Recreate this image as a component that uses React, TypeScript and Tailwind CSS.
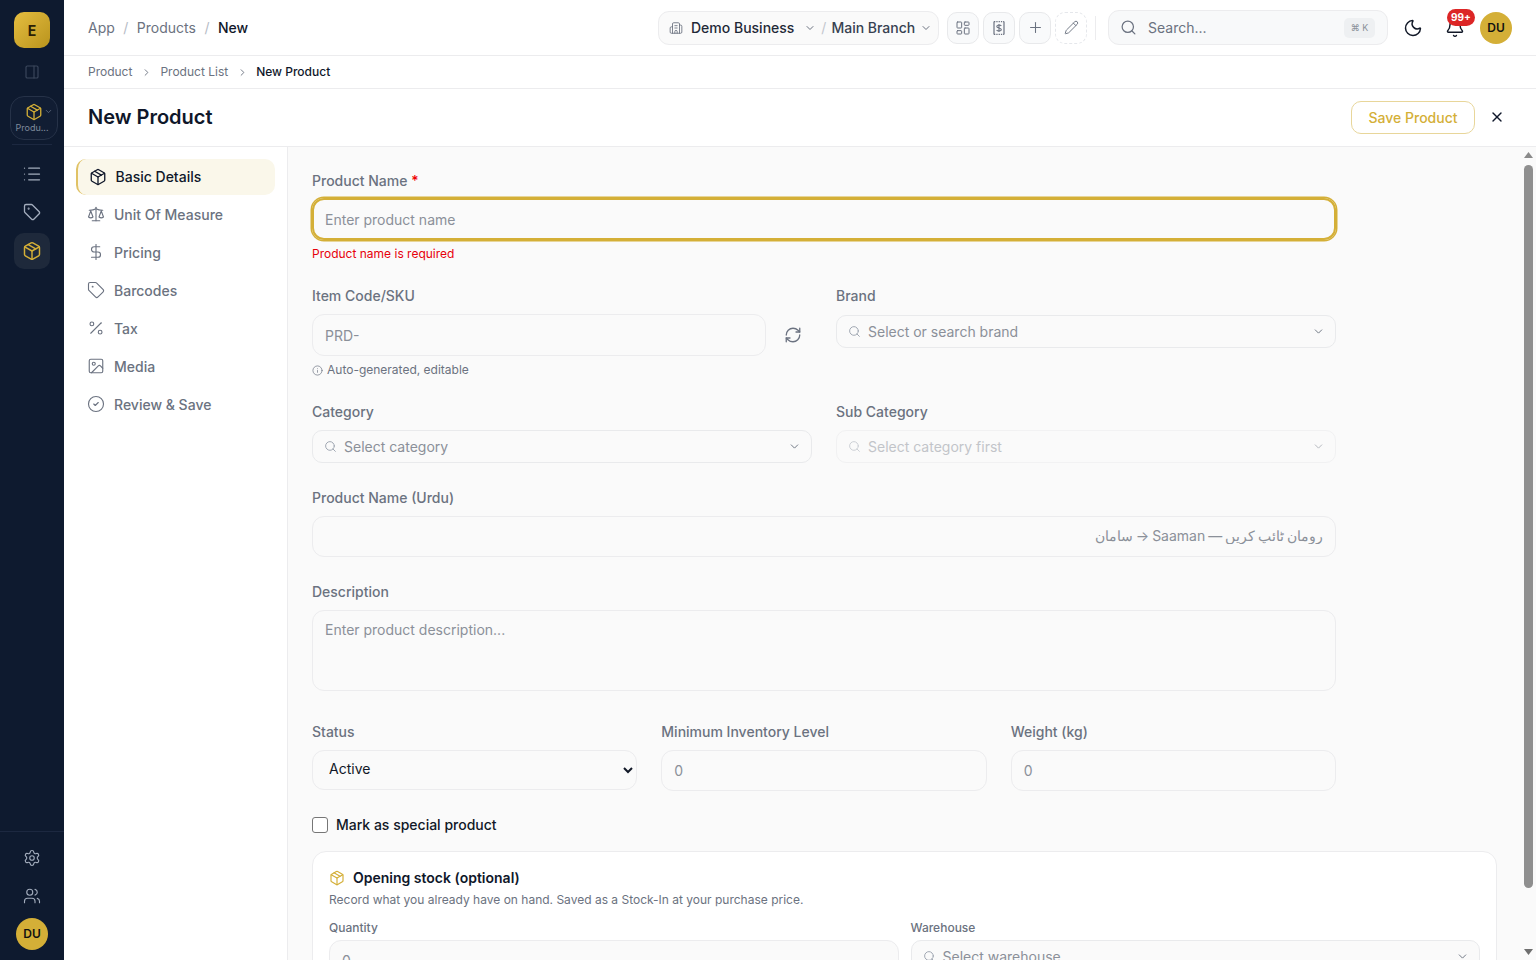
import { Package, PanelRight, ChevronDown, ChevronRight, List, Tag, Settings, Users, Scale, DollarSign, Percent, Image, CircleCheck, RefreshCw, Info, Building2, LayoutDashboard, Plus, Pencil, Search, Moon, Bell, X } from "lucide-react";

const font = { fontFamily: "Inter, 'Noto Sans', sans-serif" };

function Label({ children, className = "" }: { children: React.ReactNode; className?: string }) {
  return <label className={`block text-[14px] leading-[20px] font-medium text-[#6b7280] ${className}`}>{children}</label>;
}

function ComboBox({ placeholder, disabled = false, bg = "" }: { placeholder: string; disabled?: boolean; bg?: string }) {
  return (
    <div className={`flex h-[33px] items-center rounded-[10px] border border-[#e9eaec] pl-[11px] pr-[10px] ${bg} ${disabled ? "opacity-50" : ""}`}>
      <Search size={13} className="text-[#9ca3af]" strokeWidth={1.75} />
      <span className="ml-[7px] flex-1 text-[14px] text-[#8b9099]">{placeholder}</span>
      <ChevronDown size={13} className="text-[#6b7280]" strokeWidth={1.75} />
    </div>
  );
}

const inputCls = "block w-full rounded-[12px] border border-[#ececee] bg-transparent px-[12px] text-[14px] text-[#111827] placeholder:text-[#8b9099] outline-none";

const navItems = [
  { icon: Scale, label: "Unit Of Measure" },
  { icon: DollarSign, label: "Pricing" },
  { icon: Tag, label: "Barcodes" },
  { icon: Percent, label: "Tax" },
  { icon: Image, label: "Media" },
  { icon: CircleCheck, label: "Review & Save" },
];

function TopIconBtn({ children, dashed = false }: { children: React.ReactNode; dashed?: boolean }) {
  return (
    <button className={`flex h-[32px] w-[32px] items-center justify-center rounded-[10px] border ${dashed ? "border-dashed border-[#e5e7eb] bg-white" : "border-[#e8e9eb] bg-[#f9fafb]"} text-[#6b7280]`}>
      {children}
    </button>
  );
}

function BillIcon() {
  return (
    <svg width="12" height="14" viewBox="0 0 12 14" fill="none" stroke="currentColor" strokeWidth="1.2">
      <path d="M1 .6v12.8M11 .6v12.8" />
      <path d="M1 .6H11M1 13.4H11" strokeDasharray="1.3 1" />
      <path d="M8.3 5C8 4.4 7.2 4 6 4c-1.3 0-2.2.5-2.2 1.4C3.8 7.3 8.3 6.600 8.300 8.600c0 .9-1 1.400-2.300 1.400-1.200 0-2-.4-2.400-1.100M6 3v8" strokeWidth="1.100" />
    </svg>
  );
}

function ScrollBar() {
  return (
    <div className="absolute inset-y-0 right-0 w-[15px] bg-[#fafafa]">
      <svg className="absolute left-[3px] top-[5px]" width="9" height="6" viewBox="0 0 9 6"><path d="M4.5 0L9 6H0z" fill="#8a8a8a" /></svg>
      <div className="absolute left-[3px] top-[18px] h-[723px] w-[9px] rounded-full bg-[#8f8f8f]" />
      <svg className="absolute bottom-[5px] left-[3px]" width="9" height="6" viewBox="0 0 9 6"><path d="M4.5 6L9 0H0z" fill="#6f6f6f" /></svg>
    </div>
  );
}

export default function App() {
  return (
    <div className="flex h-screen w-full overflow-hidden bg-white text-[#0f172a]" style={font}>
      {/* Icon rail */}
      <aside className="flex w-[64px] shrink-0 flex-col items-center bg-[#0e1a2f]">
        <div className="mt-[12px] flex h-[36px] w-[36px] items-center justify-center rounded-[10px] bg-gradient-to-br from-[#e5bd3f] to-[#b9941c] text-[14px] font-bold text-[#2a1f05]">E</div>
        <PanelRight size={16} className="mt-[16px] text-[#3b475c]" strokeWidth={1.75} />
        <div className="relative ml-[4px] mt-[16px] flex h-[44px] w-[48px] flex-col items-center rounded-[14px] border border-[#263248] bg-[#111d33] pt-[6px]">
          <Package size={18} className="text-[#d4af37]" strokeWidth={1.75} />
          <ChevronDown size={9} className="absolute right-[4px] top-[10px] text-[#6b7689]" />
          <span className="relative right-[2px] mt-[1px] text-[9px] leading-[12px] text-[#7f8a9c]">Produ...</span>
        </div>
        <div className="mt-[4px] h-px w-[40px] bg-[#1c2840]" />
        <List size={20} className="mt-[19px] text-[#a3adbd]" strokeWidth={1.5} />
        <Tag size={18} className="mt-[19px] text-[#a3adbd]" strokeWidth={1.75} />
        <div className="mt-[12px] flex h-[36px] w-[36px] items-center justify-center rounded-[10px] bg-[#1e293b]">
          <Package size={20} className="text-[#d4af37]" strokeWidth={1.75} />
        </div>
        <div className="mt-auto flex w-full flex-col items-center border-t border-[#1c2840] pb-[10px] pt-[17px]">
          <Settings size={18} className="text-[#a3adbd]" strokeWidth={1.5} />
          <Users size={18} className="mt-[20px] text-[#a3adbd]" strokeWidth={1.5} />
          <div className="mt-[13px] flex h-[32px] w-[32px] items-center justify-center rounded-full bg-[#d4af37] text-[12px] font-semibold text-[#111]">DU</div>
        </div>
      </aside>

      <div className="flex min-w-0 flex-1 flex-col">
        {/* Top bar */}
        <header className="flex h-[56px] shrink-0 items-center border-b border-[#ececee] pl-[24px] pr-[24px]">
          <nav className="flex items-center text-[14px]">
            <span className="text-[#6b7280]">App</span>
            <span className="mx-[8.5px] text-[#b6bcc6]">/</span>
            <span className="text-[#6b7280]">Products</span>
            <span className="mx-[8.5px] text-[#b6bcc6]">/</span>
            <span className="font-medium text-[#0f172a]">New</span>
          </nav>
          <div className="ml-auto flex h-[34px] w-[281px] items-center rounded-[11px] border border-[#ececee] bg-[#fafafa] pl-[10px] text-[14px]">
            <Building2 size={14} className="text-[#6b7280]" strokeWidth={1.5} />
            <span className="ml-[8px] font-medium text-[#1f2937]">Demo Business</span>
            <ChevronDown size={12} className="ml-[10px] text-[#6b7280]" />
            <span className="mx-[5px] text-[#c3c7ce]">/</span>
            <span className="font-medium text-[#374151]">Main Branch</span>
            <ChevronDown size={12} className="ml-[5px] text-[#6b7280]" />
          </div>
          <div className="ml-[8px] flex items-center gap-[4px]">
            <TopIconBtn><LayoutDashboard size={16} strokeWidth={1.5} /></TopIconBtn>
            <TopIconBtn><BillIcon /></TopIconBtn>
            <TopIconBtn><Plus size={17} strokeWidth={1.5} /></TopIconBtn>
            <TopIconBtn dashed><Pencil size={15} strokeWidth={1.5} /></TopIconBtn>
          </div>
          <div className="ml-[8px] h-[24px] w-px bg-[#ececee]" />
          <div className="ml-[12px] flex h-[35px] w-[280px] items-center rounded-[11px] border border-[#ececee] bg-[#f8f9fa] pl-[11px] pr-[12px]">
            <Search size={17} className="text-[#6b7280]" strokeWidth={1.75} />
            <span className="ml-[11px] flex-1 text-[14px] text-[#6b7280]">Search...</span>
            <span className="flex h-[20px] w-[31px] items-center justify-center rounded-[5px] bg-[#eef0f2] text-[9px] text-[#8b9099]">⌘ K</span>
          </div>
          <Moon size={20} className="ml-[15px] text-[#111827]" strokeWidth={1.75} />
          <div className="relative ml-[22px]">
            <Bell size={20} className="text-[#111827]" strokeWidth={1.75} />
            <span className="absolute -top-[9px] left-[2px] flex h-[17px] w-[28px] items-center justify-center rounded-full bg-[#dc2626] text-[10px] font-bold text-white">99+</span>
          </div>
          <div className="ml-[15px] flex h-[32px] w-[32px] items-center justify-center rounded-full bg-[#d4af37] text-[12px] font-semibold text-[#111]">DU</div>
        </header>

        {/* Breadcrumbs */}
        <div className="flex h-[33px] shrink-0 items-center border-b border-[#ececee] pl-[24px] text-[12px]">
          <span className="text-[#6b7280]">Product</span>
          <ChevronRight size={11} className="mx-[8.5px] text-[#6b7280]" />
          <span className="text-[#6b7280]">Product List</span>
          <ChevronRight size={11} className="mx-[8.5px] text-[#6b7280]" />
          <span className="font-medium text-[#0f172a]">New Product</span>
        </div>

        {/* Title */}
        <div className="flex h-[58px] shrink-0 items-center border-b border-[#ececee] pb-[1px] pl-[24px] pr-[31px]">
          <h1 className="text-[20px] font-semibold text-[#0f172a]">New Product</h1>
          <button className="ml-auto mt-[1px] flex h-[33px] w-[124px] items-center justify-center rounded-[10px] border border-[#e8d69a] bg-white pb-[1px] text-[14px] font-medium text-[#d4af37]">Save Product</button>
          <X size={16} className="ml-[14px] text-[#0f172a]" strokeWidth={2} />
        </div>

        <div className="flex min-h-0 flex-1">
          {/* Step nav */}
          <aside className="w-[224px] shrink-0 border-r border-[#ececee] bg-white pl-[12px] pr-[12px] pt-[12px]">
            <div className="flex h-[36px] items-center rounded-[10px] border-l-2 border-[#e0c265] bg-[#faf7ea] pb-[1px] pl-[11px] text-[14px] font-medium text-[#0f172a]">
              <Package size={18} strokeWidth={1.75} />
              <span className="ml-[8.5px]">Basic Details</span>
            </div>
            <div className="flex flex-col">
              {navItems.map(({ icon: Icon, label }) => (
                <div key={label} className="flex h-[38px] items-center pl-[11px] text-[14px] font-medium text-[#6b7280]">
                  <Icon size={18} strokeWidth={1.5} />
                  <span className="ml-[9px]">{label}</span>
                </div>
              ))}
            </div>
          </aside>

          {/* Form */}
          <div className="relative min-w-0 flex-1 bg-[#fafafa]">
            <main className="h-full overflow-hidden pb-[24px] pl-[24px] pr-[39px] pt-[24px]">
              <div className="w-[1024px]">
                <Label>Product Name <span className="text-[#ef0000]">*</span></Label>
                <input placeholder="Enter product name" className="mt-[7px] block h-[42px] w-full rounded-[12px] border-2 border-[#d4af37] bg-transparent px-[11px] text-[14px] outline-none ring-[1.5px] ring-[#d4af37] placeholder:text-[#8b9099]" />
                <p className="mt-[6px] text-[12px] leading-[16px] text-[#e7000b]">Product name is required</p>

                <div className="mt-[24px] grid grid-cols-2 gap-x-[24px]">
                  <div>
                    <Label>Item Code/SKU</Label>
                    <div className="mt-[8px] flex items-center">
                      <input placeholder="PRD-" className={`${inputCls} h-[42px] w-[454px]!`} />
                      <RefreshCw size={18} className="ml-[18px] text-[#6b7280]" strokeWidth={1.75} />
                    </div>
                    <p className="mt-[6px] flex items-center text-[12px] leading-[16px] text-[#6b7280]">
                      <Info size={11} strokeWidth={1.5} />
                      <span className="ml-[4px]">Auto-generated, editable</span>
                    </p>
                  </div>
                  <div>
                    <Label>Brand</Label>
                    <div className="mt-[9px]"><ComboBox placeholder="Select or search brand" /></div>
                  </div>
                </div>

                <div className="mt-[24px] grid grid-cols-2 gap-x-[24px]">
                  <div>
                    <Label>Category</Label>
                    <div className="mt-[8px]"><ComboBox placeholder="Select category" /></div>
                  </div>
                  <div>
                    <Label>Sub Category</Label>
                    <div className="mt-[8px]"><ComboBox placeholder="Select category first" disabled /></div>
                  </div>
                </div>

                <Label className="mt-[25px]">Product Name (Urdu)</Label>
                <input dir="rtl" placeholder="رومان ٹائپ کریں — Saaman → سامان" className={`${inputCls} mt-[8px] h-[41px] pb-[2px] [word-spacing:-1px]`} />

                <Label className="mt-[25px]">Description</Label>
                <textarea placeholder="Enter product description..." className={`${inputCls} mt-[8px] h-[81px] resize-none pb-[9px] pt-[9px] leading-[20px]`} />

                <div className="mt-[31px] grid grid-cols-3 gap-x-[24px]">
                  <div>
                    <Label>Status</Label>
                    <select defaultValue="Active" className="mt-[8px] block h-[40px] w-full rounded-[12px] border border-[#ececee] bg-[#fafafa] px-[12px] pb-[3px] text-[14px] text-[#111827] outline-none">
                      <option>Active</option>
                      <option>Inactive</option>
                    </select>
                  </div>
                  <div>
                    <Label>Minimum Inventory Level</Label>
                    <input placeholder="0" className={`${inputCls} mt-[8px] h-[41px]`} />
                  </div>
                  <div>
                    <Label>Weight (kg)</Label>
                    <input placeholder="0" className={`${inputCls} mt-[8px] h-[41px]`} />
                  </div>
                </div>

                <label className="mt-[23px] flex items-center">
                  <span className="h-[16px] w-[16px] rounded-[3px] border border-[#767676] bg-white" />
                  <span className="ml-[8px] text-[14px] font-medium text-[#111827]">Mark as special product</span>
                </label>
              </div>

              <section className="mt-[16px] rounded-[14px] border border-[#ececee] bg-white px-[16px] pb-[16px] pt-[15px]">
                <div className="flex items-center">
                  <Package size={16} className="text-[#d4af37]" strokeWidth={1.75} />
                  <span className="ml-[8px] text-[14px] font-semibold text-[#0f172a]">Opening stock (optional)</span>
                </div>
                <p className="mt-[4px] text-[12px] leading-[16px] text-[#6b7280]">Record what you already have on hand. Saved as a Stock-In at your purchase price.</p>
                <div className="mt-[12px] grid grid-cols-2 gap-x-[12px]">
                  <div>
                    <label className="block text-[12px] font-medium leading-[16px] text-[#6b7280]">Quantity</label>
                    <input placeholder="0" className={`${inputCls} mt-[4px] h-[40px] bg-[#fafafa]!`} />
                  </div>
                  <div>
                    <label className="block text-[12px] font-medium leading-[16px] text-[#6b7280]">Warehouse</label>
                    <div className="mt-[4px]"><ComboBox placeholder="Select warehouse" bg="bg-[#fafafa]" /></div>
                  </div>
                </div>
              </section>
            </main>
            <ScrollBar />
          </div>
        </div>
      </div>
    </div>
  );
}
